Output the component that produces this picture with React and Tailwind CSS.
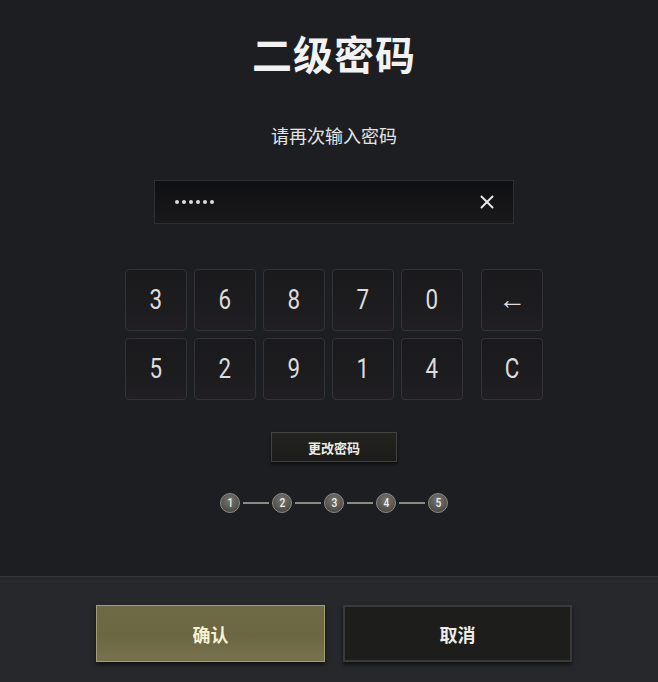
import { X } from 'lucide-react';

const ROW_1 = ['3', '6', '8', '7', '0'];
const ROW_2 = ['5', '2', '9', '1', '4'];
const STEPS = [1, 2, 3, 4, 5];

const CJK = "font-['Noto_Sans_CJK_SC','Noto_Sans',sans-serif]";

function Key({ label, plain }) {
  return (
    <button
      type="button"
      className="flex h-[62px] w-[62px] items-center justify-center rounded-[4px] border border-[#323336] bg-[linear-gradient(180deg,#1a191c_0%,#1d1c1f_70%,#211f23_100%)] font-['Roboto',sans-serif] text-[28px] leading-none text-[#dcdcdc]"
    >
      {/* the digits in the shot are a condensed face, so squeeze them */}
      <span className={plain ? 'inline-block' : 'inline-block scale-x-[0.8]'}>{label}</span>
    </button>
  );
}

function Step({ n }) {
  return (
    <div className="flex h-[20px] w-[20px] items-center justify-center rounded-full border border-[#8d8c86] bg-[radial-gradient(circle_at_50%_35%,#77766f_0%,#55544f_60%,#3d3c38_100%)] font-['Roboto',sans-serif] text-[12px] font-medium leading-none text-[#efefea]">
      <span className="inline-block scale-x-[0.85]">{n}</span>
    </div>
  );
}

export default function App() {
  return (
    <div className={`flex h-[682px] w-[658px] flex-col overflow-hidden bg-[#1c1e21] ${CJK}`}>
      <div className="flex h-[576px] flex-col items-center pl-[10px] pt-[33px]">
        <h1 className="text-[40px] font-bold leading-[40px] tracking-[1px] text-[#f2f2f2]">二级密码</h1>
        <p className="mt-[53px] text-[18px] leading-[18px] text-[#e4e4e4]">请再次输入密码</p>

        <div className="mt-[36px] flex h-[44px] w-[360px] items-center justify-between border border-[#2d2f32] bg-[linear-gradient(180deg,#0f1012_0%,#151517_60%,#19191b_100%)] pl-[20px] pr-[15px]">
          <div className="flex gap-[3px]">
            {[0, 1, 2, 3, 4, 5].map((i) => (
              <span key={i} className="h-[4px] w-[4px] rounded-full bg-[#dcdcdc]" />
            ))}
          </div>
          <X size={22} strokeWidth={2.2} className="text-[#e6e6e6]" />
        </div>

        <div className="mt-[45px] flex gap-[18px]">
          <div className="flex flex-col gap-[7px]">
            <div className="flex gap-[7px]">
              {ROW_1.map((k) => (
                <Key key={k} label={k} />
              ))}
            </div>
            <div className="flex gap-[7px]">
              {ROW_2.map((k) => (
                <Key key={k} label={k} />
              ))}
            </div>
          </div>
          <div className="flex flex-col gap-[7px]">
            <Key label="←" plain />
            <Key label="C" />
          </div>
        </div>

        <button
          type="button"
          className="mt-[32px] flex h-[30px] w-[126px] items-center justify-center border border-[#424240] bg-[linear-gradient(180deg,#232320_0%,#1b1b19_100%)] text-[13px] font-bold leading-none text-[#ecebe4] shadow-[0_2px_3px_rgba(0,0,0,0.6)]"
        >
          更改密码
        </button>

        <div className="mt-[31px] flex items-center">
          {STEPS.map((n, i) => (
            <div key={n} className="flex items-center">
              {i > 0 && <div className="mx-[3px] h-[2px] w-[26px] bg-[#8a8a86]" />}
              <Step n={n} />
            </div>
          ))}
        </div>
      </div>

      <div className="flex flex-1 justify-center gap-[18px] border-t border-[#36373b] bg-[#27282c] pl-[10px] pt-[28px]">
        <button
          type="button"
          className="flex h-[57px] w-[229px] items-center justify-center border border-[#a29e72] bg-[linear-gradient(180deg,#6d6a45_0%,#6a6742_55%,#76734e_100%)] text-[18px] font-bold leading-none text-[#f6f2d2] shadow-[0_3px_4px_rgba(0,0,0,0.55)]"
        >
          确认
        </button>
        <button
          type="button"
          className="flex h-[57px] w-[229px] items-center justify-center border-2 border-[#393a38] bg-[#1d1e1b] text-[18px] font-bold leading-none text-[#ececea] shadow-[0_3px_4px_rgba(0,0,0,0.55)]"
        >
          取消
        </button>
      </div>
    </div>
  );
}
